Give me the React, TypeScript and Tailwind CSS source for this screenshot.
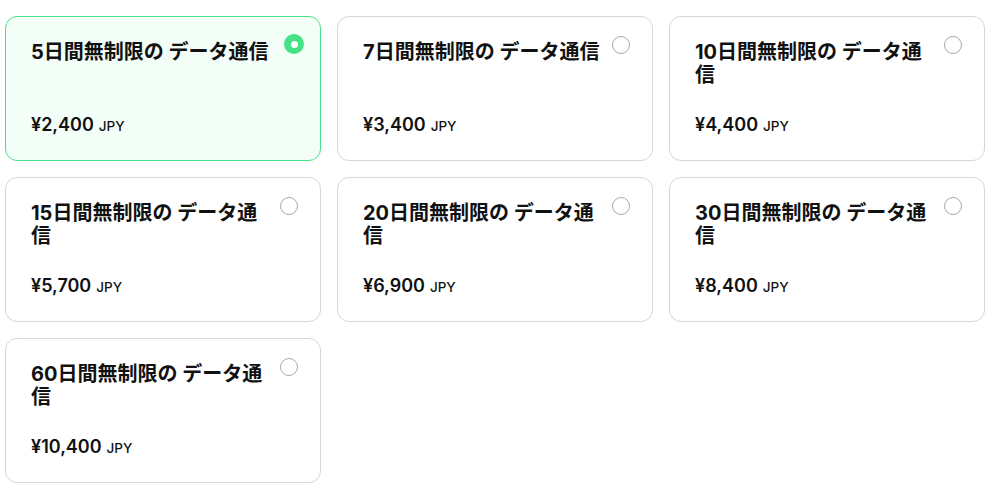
import React from 'react';

type Plan = {
  days: number;
  price: string;
};

const PLANS: Plan[] = [
  { days: 5, price: '¥2,400' },
  { days: 7, price: '¥3,400' },
  { days: 10, price: '¥4,400' },
  { days: 15, price: '¥5,700' },
  { days: 20, price: '¥6,900' },
  { days: 30, price: '¥8,400' },
  { days: 60, price: '¥10,400' },
];

function PlanCard({ plan, selected }: { plan: Plan; selected: boolean }) {
  return (
    <div
      className={
        selected
          ? 'h-[145px] flex flex-col justify-between rounded-xl border border-[#4be08a] bg-[#f3fef8] pl-[25px] pr-[22px] pt-[24px] pb-5'
          : 'h-[145px] flex flex-col justify-between rounded-xl border border-[#d6d6d9] bg-white pl-[25px] pr-[22px] pt-[24px] pb-5'
      }
    >
      <div className="flex items-start gap-1">
        <h3 className="flex-1 text-[20px] leading-[23px] font-bold text-[#111]">
          {plan.days}日間無制限の データ通信
        </h3>
        {selected ? (
          <span className="-mt-[7px] -mr-[6px] w-5 h-5 shrink-0 rounded-full bg-[#44e283] flex items-center justify-center">
            <span className="w-[7px] h-[7px] rounded-full bg-white" />
          </span>
        ) : (
          <span className="-mt-[5px] w-[18px] h-[18px] shrink-0 rounded-full border-[1.5px] border-[#a9a9b0] bg-white" />
        )}
      </div>
      <div className="flex items-baseline leading-7 text-[#111]">
        <span className="text-[18px] font-semibold">{plan.price}</span>
        <span className="ml-[5px] text-[13.5px] font-medium">JPY</span>
      </div>
    </div>
  );
}

export default function App() {
  return (
    <div
      className="min-h-screen bg-white pl-[5px] pt-4"
      style={{ fontFamily: 'Inter, "Noto Sans CJK JP", sans-serif' }}
    >
      <div className="grid grid-cols-3 gap-4 w-[980px]">
        {PLANS.map((plan, i) => (
          <PlanCard key={plan.days} plan={plan} selected={i === 0} />
        ))}
      </div>
    </div>
  );
}
